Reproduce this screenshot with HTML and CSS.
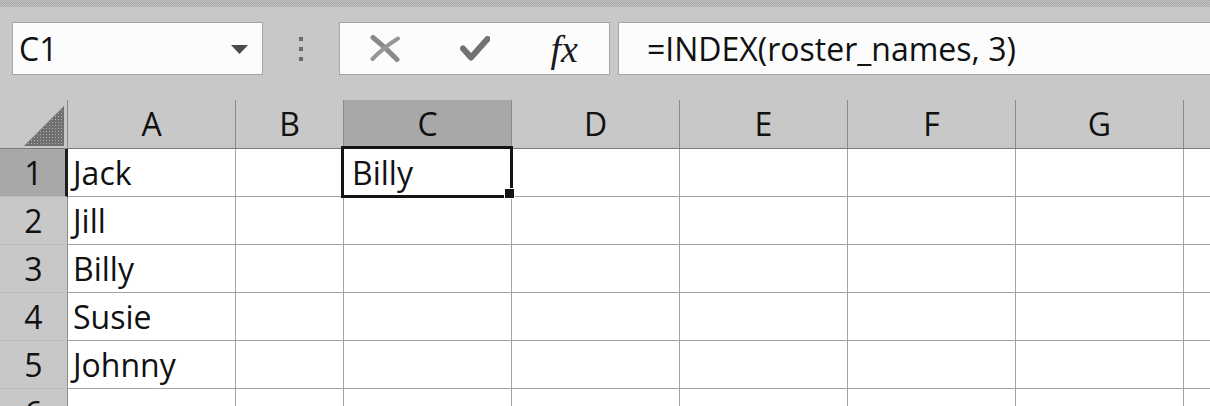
FILE: index.html
```html
<!DOCTYPE html>
<html>
<head>
<meta charset="utf-8">
<link rel="stylesheet" href="styles.css">
</head>
<body>
<div class="app">
  <div class="topband"></div>
  <div class="fbar">
    <div class="namebox">
      <span class="nb-text">C1</span>
      <svg class="nb-arrow" width="17" height="9" viewBox="0 0 17 9"><path d="M0 0H17L8.5 9Z" fill="#4a4a4a"/></svg>
    </div>
    <div class="grip"><i></i><i></i><i></i></div>
    <div class="fbtns">
      <span class="fbtn"><svg width="30" height="27" viewBox="0 0 30 27"><path d="M3 2.5Q15 12 27 24.5" stroke="#8a8a8a" stroke-width="5" fill="none" stroke-linecap="round"/><path d="M28 3.5Q14 12 2.5 24" stroke="#979797" stroke-width="4" fill="none" stroke-linecap="round"/></svg></span>
      <span class="fbtn"><svg width="30" height="26" viewBox="0 0 30 26"><path d="M3 12.5L11 21.5L27.5 3" stroke="#727272" stroke-width="6" fill="none" stroke-linecap="round" stroke-linejoin="round"/></svg></span>
      <span class="fbtn fx">fx</span>
    </div>
    <div class="formula">=INDEX(roster_names, 3)</div>
  </div>
  <div class="sheet">
    <div class="corner"><svg width="40" height="40" viewBox="0 0 40 40"><defs><pattern id="dots" width="3" height="3" patternUnits="userSpaceOnUse"><rect width="3" height="3" fill="#707070"/><rect x="1" y="1" width="1" height="1" fill="#b0b0b0"/></pattern></defs><path d="M40 0V40H0Z" fill="url(#dots)"/></svg></div>
    <div class="ch">A</div>
    <div class="ch">B</div>
    <div class="ch sel">C</div>
    <div class="ch">D</div>
    <div class="ch">E</div>
    <div class="ch">F</div>
    <div class="ch">G</div>
    <div class="ch"></div>

    <div class="rh sel">1</div>
    <div class="cell">Jack</div><div class="cell"></div><div class="cell active"><span class="ctext">Billy</span><span class="selbox"><span class="handle"></span></span></div><div class="cell"></div><div class="cell"></div><div class="cell"></div><div class="cell"></div><div class="cell"></div>

    <div class="rh">2</div>
    <div class="cell">Jill</div><div class="cell"></div><div class="cell"></div><div class="cell"></div><div class="cell"></div><div class="cell"></div><div class="cell"></div><div class="cell"></div>

    <div class="rh">3</div>
    <div class="cell">Billy</div><div class="cell"></div><div class="cell"></div><div class="cell"></div><div class="cell"></div><div class="cell"></div><div class="cell"></div><div class="cell"></div>

    <div class="rh">4</div>
    <div class="cell">Susie</div><div class="cell"></div><div class="cell"></div><div class="cell"></div><div class="cell"></div><div class="cell"></div><div class="cell"></div><div class="cell"></div>

    <div class="rh">5</div>
    <div class="cell">Johnny</div><div class="cell"></div><div class="cell"></div><div class="cell"></div><div class="cell"></div><div class="cell"></div><div class="cell"></div><div class="cell"></div>

    <div class="rh">6</div>
    <div class="cell"></div><div class="cell"></div><div class="cell"></div><div class="cell"></div><div class="cell"></div><div class="cell"></div><div class="cell"></div><div class="cell"></div>
  </div>
</div>
</body>
</html>
```
FILE: styles.css
```css
html, body {
  margin: 0;
  padding: 0;
}
body {
  background: #c8c8c8;
  overflow: hidden;
  width: 1210px;
  height: 406px;
  font-family: "Open Sans", "Noto Sans", sans-serif;
  font-size: 32px;
  color: #111;
}
.app {
  width: 1210px;
  height: 406px;
  overflow: hidden;
}
.topband {
  height: 7px;
  background: repeating-conic-gradient(#aaaaaa 0 25%, #c3c3c3 0 50%) 0 0 / 2px 2px;
}
.fbar {
  display: flex;
  height: 53px;
  margin-top: 15px;
  padding-left: 12px;
  line-height: 51px;
}
.namebox {
  width: 251px;
  box-sizing: border-box;
  border: 1px solid #a6a6a6;
  background: #fcfcfc;
  display: flex;
  align-items: center;
  justify-content: space-between;
  padding: 0 14px 0 6px;
}
.nb-arrow {
  display: block;
  margin-top: 1px;
}
.grip {
  width: 76px;
  display: flex;
  flex-direction: column;
  align-items: center;
  justify-content: center;
  gap: 6px;
}
.grip i {
  display: block;
  width: 4px;
  height: 4px;
  background: #6b6b6b;
}
.fbtns {
  width: 271px;
  box-sizing: border-box;
  border: 1px solid #a6a6a6;
  background: #fcfcfc;
  display: flex;
}
.fbtn {
  flex: 1;
  display: flex;
  align-items: center;
  justify-content: center;
}
.fbtn svg {
  display: block;
}
.fx {
  font-family: "Liberation Serif", serif;
  font-style: italic;
  font-size: 38px;
  color: #1a1a1a;
  padding-top: 1px;
}
.formula {
  flex: 1;
  margin-left: 8px;
  margin-right: -10px;
  box-sizing: border-box;
  border: 1px solid #a6a6a6;
  background: #fcfcfc;
  padding-left: 28px;
  white-space: nowrap;
}
.sheet {
  margin-top: 25px;
  display: grid;
  grid-template-columns: 68px 168px 108px 168px 168px 168px 168px 168px 60px;
  grid-template-rows: 49px repeat(6, 48px);
}
.sheet > div {
  box-sizing: border-box;
  border-right: 1px solid #a3a3a3;
  border-bottom: 1px solid #a3a3a3;
  background: #fff;
  line-height: 47px;
  white-space: nowrap;
}
.corner {
  display: flex;
  align-items: flex-end;
  justify-content: flex-end;
  padding: 0 3px 2px 0;
}
.sheet > .corner,
.sheet > .ch {
  background: #c8c8c8;
  border-right-color: #8c8c8c;
  border-bottom-color: #7a7a7a;
}
.corner svg {
  display: block;
}
.ch {
  text-align: center;
  line-height: 48px !important;
}
.sheet > .ch.sel {
  background: #a8a8a8;
}
.sheet > .rh {
  background: #c8c8c8;
  border-right-color: #8c8c8c;
  border-bottom-color: #bcbcbc;
  text-align: center;
}
.sheet > .rh.sel {
  background: #a8a8a8;
  border-right: 3px solid #1c1c1c;
  padding-left: 2px;
}
.cell {
  padding-left: 5px;
}
.cell.active {
  position: relative;
  padding-left: 8px;
}
.selbox {
  position: absolute;
  left: -3px;
  top: -3px;
  right: -2px;
  bottom: -2px;
  border: 3px solid #141414;
}
.handle {
  position: absolute;
  right: -5px;
  bottom: -4px;
  width: 9px;
  height: 9px;
  background: #141414;
  border: 1px solid #fff;
}
```
